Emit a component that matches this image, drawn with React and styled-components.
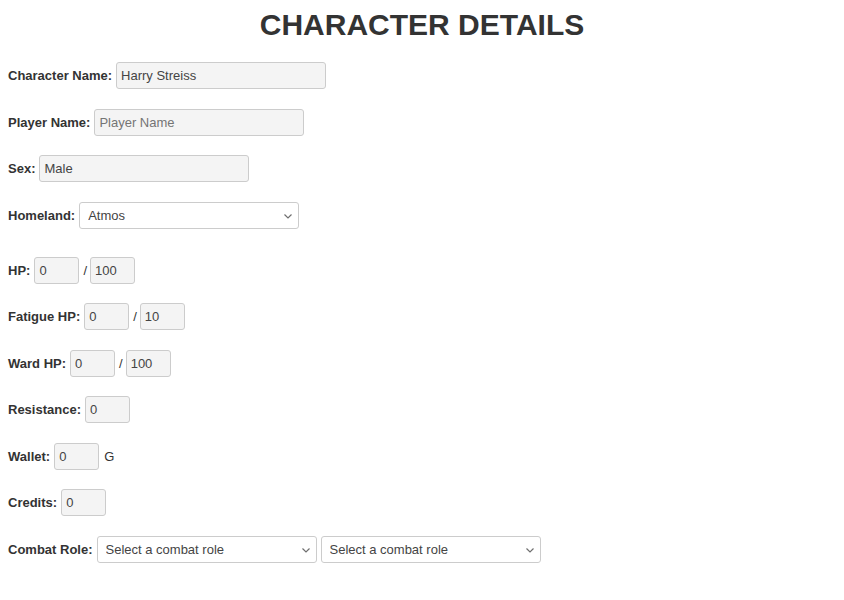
import React from 'react'
import styled, { createGlobalStyle } from 'styled-components'

const GlobalStyle = createGlobalStyle`
    body {
        margin: 8px;
        background: #fff;
        font-family: "Liberation Sans", Arial, sans-serif;
        color: #333;
    }
`

const Dropdown = ({ children, defaultValue }) => (
    <SelectWrap>
        <Select defaultValue={defaultValue}>{children}</Select>
        <Chevron width="8" height="5" viewBox="0 0 8 5">
            <path d="M0.5 0.5 L4 4 L7.5 0.5" fill="none" stroke="#6f6f6f" strokeWidth="1.2" />
        </Chevron>
    </SelectWrap>
)

const App = () => {
    return (
        <>
            <GlobalStyle />
            <Sheet>
                <Title>CHARACTER DETAILS</Title>
                <Section>
                    <Row>
                        <Label>Character Name:</Label>
                        <TextInput defaultValue="Harry Streiss" />
                    </Row>
                    <Row>
                        <Label>Player Name:</Label>
                        <TextInput placeholder="Player Name" />
                    </Row>
                    <Row>
                        <Label>Sex:</Label>
                        <TextInput defaultValue="Male" />
                    </Row>
                    <Row>
                        <Label>Homeland:</Label>
                        <Dropdown defaultValue="Atmos">
                            <option>Atmos</option>
                        </Dropdown>
                    </Row>
                </Section>
                <Section>
                    <Row>
                        <Label>HP:</Label>
                        <SmallInput defaultValue="0" />
                        <Slash>/</Slash>
                        <SmallInput defaultValue="100" />
                    </Row>
                    <Row>
                        <Label>Fatigue HP:</Label>
                        <SmallInput defaultValue="0" />
                        <Slash>/</Slash>
                        <SmallInput defaultValue="10" />
                    </Row>
                    <Row>
                        <Label>Ward HP:</Label>
                        <SmallInput defaultValue="0" />
                        <Slash>/</Slash>
                        <SmallInput defaultValue="100" />
                    </Row>
                    <Row>
                        <Label>Resistance:</Label>
                        <SmallInput defaultValue="0" />
                    </Row>
                    <Row>
                        <Label>Wallet:</Label>
                        <SmallInput defaultValue="0" />
                        <Unit>G</Unit>
                    </Row>
                    <Row>
                        <Label>Credits:</Label>
                        <SmallInput defaultValue="0" />
                    </Row>
                    <Row>
                        <Label>Combat Role:</Label>
                        <Dropdown defaultValue="">
                            <option value="">Select a combat role</option>
                        </Dropdown>
                        <Dropdown defaultValue="">
                            <option value="">Select a combat role</option>
                        </Dropdown>
                    </Row>
                </Section>
            </Sheet>
        </>
    )
}

export default App

const Sheet = styled.div`
    display: flex;
    flex-direction: column;
    gap: 28px;
`

const Title = styled.h1`
    margin: 0 0 -8px 0;
    text-align: center;
    font-size: 30px;
    line-height: 34px;
    font-weight: bold;
    color: #333;
`

const Section = styled.div`
    display: flex;
    flex-direction: column;
    gap: 19.5px;
`

const Row = styled.div`
    display: flex;
    align-items: center;
    height: 27px;
`

const Label = styled.label`
    font-size: 13px;
    font-weight: bold;
    color: #333;
    margin-right: 4px;
`

const TextInput = styled.input`
    box-sizing: border-box;
    width: 210px;
    height: 27px;
    padding: 0 4px;
    border: 1px solid #ccc;
    border-radius: 3px;
    background: #f4f4f4;
    font-family: "Liberation Sans", Arial, sans-serif;
    font-size: 13px;
    color: #444;
    outline: none;

    &::placeholder {
        color: #757575;
    }
`

const SmallInput = styled(TextInput)`
    width: 45px;
`

const SelectWrap = styled.div`
    position: relative;
    display: flex;
    margin-right: 4px;
`

const Select = styled.select`
    box-sizing: border-box;
    appearance: none;
    width: 220px;
    height: 27px;
    padding: 0 20px 0 8px;
    border: 1px solid #ccc;
    border-radius: 3px;
    background: #fff;
    font-family: "Liberation Sans", Arial, sans-serif;
    font-size: 13px;
    color: #444;
    outline: none;
`

const Chevron = styled.svg`
    position: absolute;
    right: 7px;
    top: 12px;
    pointer-events: none;
`

const Slash = styled.span`
    font-size: 13px;
    color: #333;
    margin: 0 3px 0 4px;
`

const Unit = styled.span`
    font-size: 13px;
    color: #333;
    margin-left: 5px;
`
